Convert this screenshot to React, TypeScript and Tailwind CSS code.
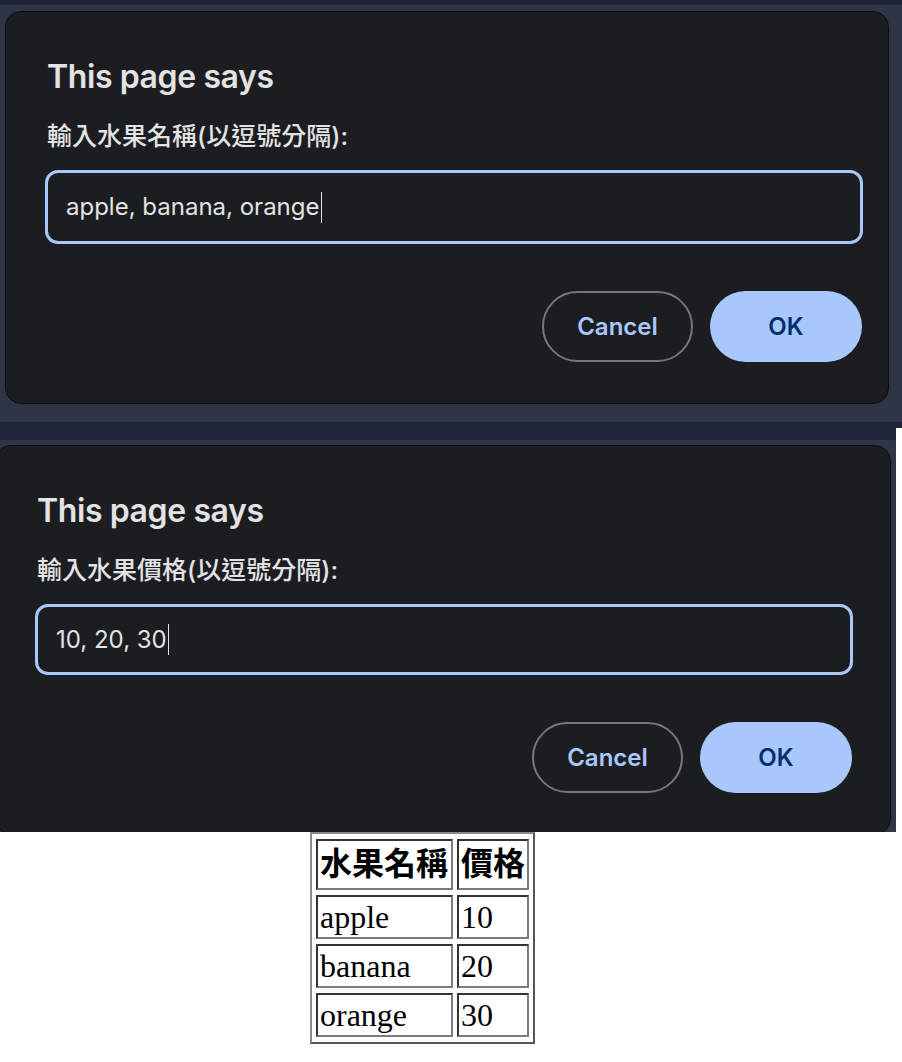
const uiFont = { fontFamily: '"Inter", "Noto Sans CJK TC", sans-serif' };
const serifFont = { fontFamily: '"Liberation Serif", "Noto Sans CJK TC", serif' };

type DialogProps = {
  label: string;
  value: string;
  className: string;
};

function PromptDialog({ label, value, className }: DialogProps) {
  return (
    <div
      className={`shrink-0 rounded-[16px] border border-[#0c0d11] bg-[#1c1d21] pl-[39px] pr-[25px] pt-[45px] pb-[41px] flex flex-col ${className}`}
      style={uiFont}
    >
      <h2 className="text-[32px] leading-[40px] font-semibold text-[#e3e3e3] pl-[2px] tracking-[-0.4px]">
        This page says
      </h2>
      <p className="mt-[22px] text-[25px] leading-[34px] font-medium text-[#e3e3e3] pl-[2px]">{label}</p>
      <div className="mt-[17px] w-[818px] h-[74px] rounded-[13px] border-[3px] border-[#a8c7fa] flex items-center pl-[18px]">
        <span className="text-[24px] leading-[32px] text-[#e3e3e3]">{value}</span>
        <span className="ml-[1px] h-[31px] w-[1.5px] bg-[#e3e3e3]" />
      </div>
      <div className="mt-[47px] w-[818px] flex justify-end gap-[17px] pr-[1px]">
        <button className="w-[151px] h-[71px] rounded-full border-2 border-[#74777c] text-[24px] font-semibold text-[#a8c7fa]">
          Cancel
        </button>
        <button className="w-[152px] h-[71px] rounded-full bg-[#a8c7fa] text-[24px] font-semibold text-[#062e6f]">
          OK
        </button>
      </div>
    </div>
  );
}

const rows = [
  { name: "apple", price: "10" },
  { name: "banana", price: "20" },
  { name: "orange", price: "30" },
];

const cell =
  "border-2 border-t-[#333333] border-l-[#333333] border-r-[#7c7c7c] border-b-[#7c7c7c] px-[2px] py-[2px] text-left align-middle";

export default function App() {
  return (
    <div className="w-[902px] min-h-[1062px] bg-white overflow-hidden">
      {/* first prompt */}
      <div className="h-[422px] bg-[#2e3546] flex flex-col">
        <div className="h-[5px] bg-[#1e2536]" />
        <PromptDialog
          className="ml-[5px] mt-[6px] w-[884px] h-[393px]"
          label="輸入水果名稱(以逗號分隔):"
          value="apple, banana, orange"
        />
      </div>
      <div className="h-[6px] bg-[#1f2638]" />

      {/* second prompt */}
      <div className="w-[896px] h-[404px] bg-[#2e3546] flex flex-col overflow-hidden">
        <div className="h-[12px] bg-[#1f2638] shrink-0" />
        <PromptDialog
          className="ml-[-5px] mt-[5px] w-[896px] h-[390px]"
          label="輸入水果價格(以逗號分隔):"
          value="10, 20, 30"
        />
      </div>

      {/* result table */}
      <table
        className="ml-[310px] border-separate border-spacing-x-[4px] border-spacing-y-[5px] border-2 border-t-[#8a8a8a] border-l-[#8a8a8a] border-r-[#555555] border-b-[#555555] text-black text-[32px]"
        style={serifFont}
      >
        <thead>
          <tr>
            <th className={`${cell} w-[137px] leading-[43px] font-bold`}>水果名稱</th>
            <th className={`${cell} w-[72px] leading-[43px] font-bold`}>價格</th>
          </tr>
        </thead>
        <tbody>
          {rows.map((r) => (
            <tr key={r.name}>
              <td className={`${cell} leading-[36px]`}>{r.name}</td>
              <td className={`${cell} leading-[36px]`}>{r.price}</td>
            </tr>
          ))}
        </tbody>
      </table>
    </div>
  );
}
